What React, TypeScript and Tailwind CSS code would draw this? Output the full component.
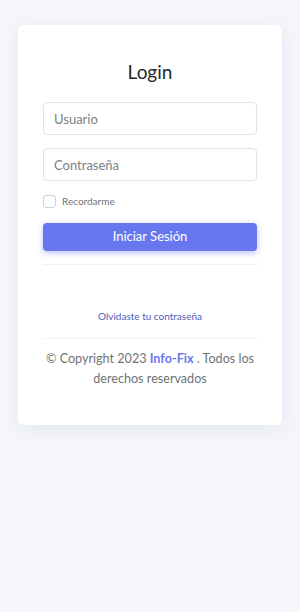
import React from 'react';

const App: React.FC = () => {
  return (
    <div
      className="min-h-[612px] w-full bg-[#f4f6fb] pt-[25px]"
      style={{ fontFamily: 'Lato, "Noto Sans", sans-serif' }}
    >
      <div className="mx-[18px] rounded-md bg-white px-[25px] pb-[36px] pt-[34px] shadow-[0_4px_18px_rgba(60,70,110,0.08)]">
        <h1 className="text-center text-[19px] leading-[26px] text-[#25282c]">Login</h1>

        <div className="mt-[17px] flex flex-col gap-[13px]">
          <input
            placeholder="Usuario"
            className="h-[33px] w-full rounded-[4px] border border-[#dfe1e5] bg-white px-[10px] text-[13px] text-[#495057] outline-none placeholder:text-[#7a7f85]"
          />
          <input
            type="password"
            placeholder="Contraseña"
            className="h-[33px] w-full rounded-[4px] border border-[#dfe1e5] bg-white px-[10px] text-[13px] text-[#495057] outline-none placeholder:text-[#7a7f85]"
          />
        </div>

        <label className="mt-[14px] flex items-center gap-[6px]">
          <span className="h-[13px] w-[13px] rounded-[3px] border border-[#cfd3d8] bg-white" />
          <span className="text-[10px] leading-[13px] text-[#6c757d]">Recordarme</span>
        </label>

        <button className="mt-[15px] h-[28px] w-full rounded-[4px] bg-[#6777ef] text-[13px] text-white shadow-[0_2px_6px_rgba(103,119,239,0.45)]">
          Iniciar Sesión
        </button>

        <div className="mt-[13px] h-px bg-[#f1f2f4]" />

        <div className="mt-[45px] text-center text-[10px] leading-[13px] text-[#4e5bbd]">
          Olvidaste tu contraseña
        </div>

        <div className="mt-[15px] h-px bg-[#f1f2f4]" />

        <p className="mt-[10px] whitespace-nowrap text-center text-[12.6px] leading-[20px] text-[#6f7378]">
          © Copyright 2023 <span className="font-bold text-[#6777ef]">Info-Fix</span> . Todos los
          <br />
          derechos reservados
        </p>
      </div>
    </div>
  );
};

export default App;
